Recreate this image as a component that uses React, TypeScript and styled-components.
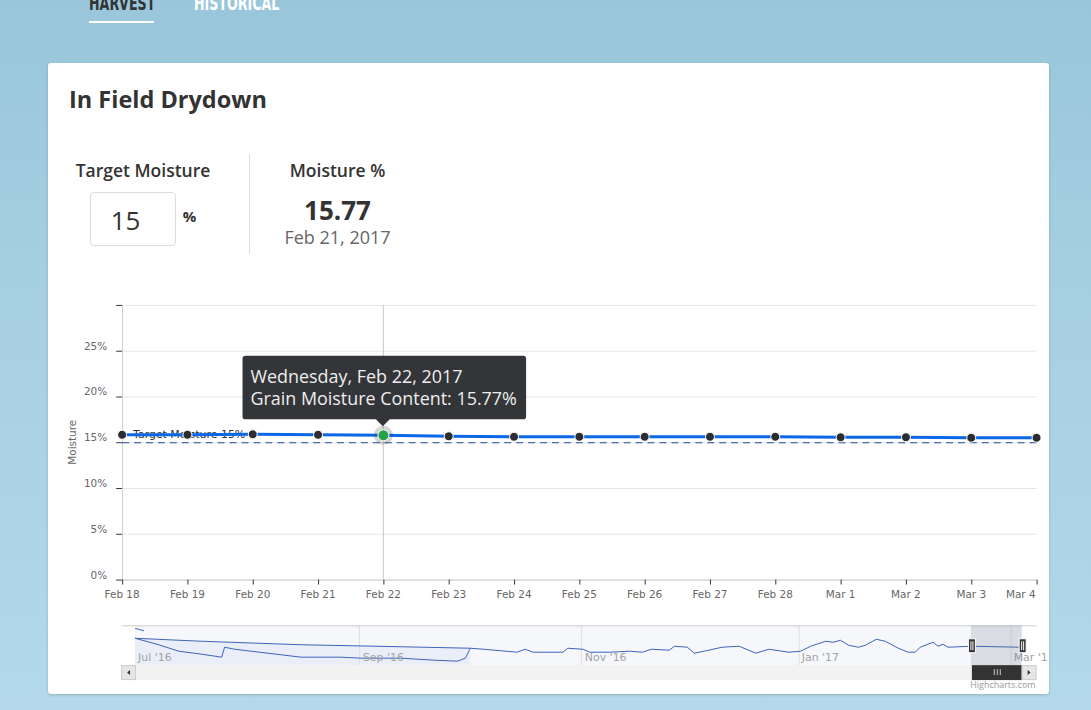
import React from "react";
import styled, { createGlobalStyle } from "styled-components";

const Global = createGlobalStyle`
  html, body { margin: 0; padding: 0; }
  body {
    min-height: 710px;
    overflow: hidden;
    background: linear-gradient(180deg, #99c6da 0%, #a6cfe1 40%, #b3d9ea 100%);
    font-family: "Open Sans", "Noto Sans", sans-serif;
    color: #333;
  }
`;

const Page = styled.div`
  display: flex;
  flex-direction: column;
`;

const TabBar = styled.nav`
  display: flex;
  gap: 40px;
  padding-left: 89px;
  margin-top: -8px;
`;

const Tab = styled.div<{ $active?: boolean; $w: number }>`
  width: ${(p) => p.$w}px;
  font-family: "Liberation Sans Narrow", "DejaVu Sans Condensed", "Roboto", sans-serif;
  font-weight: 700;
  font-size: 19px;
  line-height: 22px;
  text-transform: uppercase;
  color: ${(p) => (p.$active ? "#333" : "#fff")};
  padding-bottom: 7px;
  border-bottom: 2px solid ${(p) => (p.$active ? "#fff" : "transparent")};
  white-space: nowrap;
`;

const TabText = styled.span`
  display: inline-block;
  transform: scaleX(0.74);
  transform-origin: left center;
`;

const Card = styled.section`
  margin: 40px 0 0 48px;
  width: 1001px;
  height: 631px;
  background: #fff;
  border-radius: 3px;
  box-shadow: 0 1px 3px rgba(0, 0, 0, 0.18);
  overflow: hidden;
  display: flex;
  flex-direction: column;
`;

const Title = styled.h1`
  margin: 0;
  padding: 21px 21px 0;
  font-size: 23.5px;
  line-height: 30px;
  font-weight: 700;
  color: #333;
`;

const StatsRow = styled.div`
  display: flex;
  margin: 40px 0 0 26px;
`;

const StatCol = styled.div<{ $divider?: boolean; $width: number; $pr?: number }>`
  width: ${(p) => p.$width}px;
  padding: 4px ${(p) => p.$pr ?? 0}px 6px 0;
  display: flex;
  flex-direction: column;
  align-items: center;
  border-right: ${(p) => (p.$divider ? "1px solid #ddd" : "none")};
`;

const Label = styled.div`
  font-size: 17.5px;
  line-height: 24px;
  font-weight: 600;
  color: #333;
  white-space: nowrap;
`;

const InputRow = styled.div`
  display: flex;
  align-items: flex-start;
  gap: 7px;
  margin-top: 10px;
`;

const NumInput = styled.div`
  width: 64px;
  height: 52px;
  border: 1px solid #dcdcdc;
  border-radius: 4px;
  padding-left: 20px;
  font-size: 26px;
  line-height: 54px;
  color: #333;
  font-weight: 400;
`;

const Unit = styled.span`
  font-size: 15px;
  font-weight: 700;
  line-height: 20px;
  margin-top: 14px;
`;

const BigValue = styled.div`
  font-size: 26px;
  line-height: 30px;
  font-weight: 700;
  color: #333;
  margin-top: 13px;
`;

const SubValue = styled.div`
  font-size: 18px;
  line-height: 22px;
  color: #666;
  margin-top: 1px;
`;

const ChartSvg = styled.svg`
  display: block;
  margin-top: 38px;
  font-family: "DejaVu Sans", "Liberation Sans", sans-serif;
`;

const days = [
  "Feb 18", "Feb 19", "Feb 20", "Feb 21", "Feb 22", "Feb 23", "Feb 24", "Feb 25",
  "Feb 26", "Feb 27", "Feb 28", "Mar 1", "Mar 2", "Mar 3", "Mar 4",
];
const ys = [433.5, 433.5, 433, 433.5, 434, 435, 435.5, 435.5, 435.5, 435.5, 435.5, 436, 436, 436.5, 436.5];
const xAt = (i: number) => 120 + (i * (1039 - 120)) / 14;

const grids = [303, 349, 395, 441, 487, 533, 579];
const yLabels: [string, number][] = [
  ["25%", 349], ["20%", 395], ["15%", 441], ["10%", 487], ["5%", 533], ["0%", 579],
];

const lowerNav =
  "133,638 155,644 177,651 200,654 220,657 223,647 233,649 300,657 340,657 360,658 400,658 433,660 457,661 465,658 470,648 483,649 517,652 525,649 533,652 563,652 568,648 583,649 590,652 610,652 630,651 643,652 652,649 670,650 675,646 688,647 695,653 705,651 723,647 740,646 757,653 770,649 790,652 802,651 812,646 827,641 835,642 842,640 850,645 860,647 867,645 878,639 887,641 900,648 910,652 917,652 922,647 935,642 940,646 945,644 950,647 973,646 1024,647";
const upperNav = "133,638 200,641 300,644.5 400,646.5 470,648";

function Chart() {
  const pts = ys.map((y, i) => `${xAt(i)},${y}`).join(" ");
  return (
    <ChartSvg width={1001} height={404} viewBox="48 290 1001 404">
      {grids.map((g) => (
        <line key={g} x1={120} x2={1039} y1={g + 0.5} y2={g + 0.5} stroke="#e6e6e6" />
      ))}
      {grids.map((g) => (
        <line key={"t" + g} x1={114} x2={120} y1={g + 0.5} y2={g + 0.5} stroke="#333" />
      ))}
      <line x1={120.5} x2={120.5} y1={303} y2={579} stroke="#ccc" />
      <line x1={120} x2={1039} y1={579.5} y2={579.5} stroke="#ccc" />
      {yLabels.map(([t, g]) => (
        <text key={t} x={105} y={g - 1} textAnchor="end" fontSize={10.5} fill="#666">
          {t}
        </text>
      ))}
      <text
        x={74}
        y={441}
        transform="rotate(-90 74 441)"
        textAnchor="middle"
        fontSize={10.5}
        fill="#666"
      >
        Moisture
      </text>
      {days.map((d, i) => (
        <g key={d}>
          <line x1={xAt(i) + 0.5} x2={xAt(i) + 0.5} y1={579} y2={584} stroke="#333" />
          <text
            x={i === 14 ? 1038 : xAt(i)}
            y={598}
            textAnchor={i === 14 ? "end" : "middle"}
            fontSize={10.5}
            fill="#666"
          >
            {d}
          </text>
        </g>
      ))}
      <line x1={382.5} x2={382.5} y1={303} y2={579} stroke="#c8c8c8" />
      <line x1={120} x2={1039} y1={441.5} y2={441.5} stroke="#1d4a9a" strokeWidth={1} strokeDasharray="7 5" />
      <text x={131} y={437} fontSize={11} fill="#333">
        Target Moisture 15%
      </text>
      <polyline points={pts} fill="none" stroke="#0a68e6" strokeWidth={3} strokeLinejoin="round" />
      {ys.map((y, i) =>
        i === 4 ? null : (
          <circle key={i} cx={xAt(i)} cy={y} r={4.5} fill="#2b2d31" stroke="#fff" strokeWidth={1} />
        )
      )}
      <circle cx={xAt(4)} cy={ys[4]} r={9.5} fill="#2b2d31" opacity={0.2} />
      <circle cx={xAt(4)} cy={ys[4]} r={5.5} fill="#27a149" stroke="#fff" strokeWidth={1} />
      <path
        d="M244,354 H523 Q526,354 526,357 V415 Q526,418 523,418 H389 L382,425 L375,418 H244 Q241,418 241,415 V357 Q241,354 244,354 Z"
        fill="#2c2e33"
        opacity={0.97}
      />
      <text x={249} y={381} fontSize={18} fill="#eee" fontFamily="'Open Sans', sans-serif">
        Wednesday, Feb 22, 2017
      </text>
      <text x={249} y={404} fontSize={18} fill="#eee" fontFamily="'Open Sans', sans-serif">
        Grain Moisture Content: 15.77%
      </text>

      <rect x={133} y={625} width={891} height={40} fill="#f5f7fb" />
      <polygon points={`${upperNav} 470,665 133,665`} fill="#eaeef8" />
      {[358, 581, 800, 1013].map((x) => (
        <line key={x} x1={x + 0.5} x2={x + 0.5} y1={625} y2={665} stroke="#e0e0e0" />
      ))}
      <line x1={120} x2={1039} y1={625.5} y2={625.5} stroke="#ccc" />
      <polyline points={upperNav} fill="none" stroke="#3b63b8" strokeWidth={1} />
      <polyline points={lowerNav} fill="none" stroke="#3b63b8" strokeWidth={1} />
      <polyline points="133,628 142,630.5" fill="none" stroke="#3b63b8" strokeWidth={1} />
      {[["Jul '16", 136], ["Sep '16", 362], ["Nov '16", 585], ["Jan '17", 803], ["Mar '1", 1016]].map(
        ([t, x]) => (
          <text key={t as string} x={x as number} y={661} fontSize={11} fill="#a3a3a3">
            {t}
          </text>
        )
      )}
      <rect x={973} y={625} width={51} height={40} fill="#6b7280" opacity={0.2} />
      {[970, 1021].map((x) => (
        <g key={x}>
          <rect x={x + 0.5} y={638.5} width={7} height={14} fill="#333" stroke="#fff" />
          <line x1={x + 3} x2={x + 3} y1={641} y2={650} stroke="#fff" />
          <line x1={x + 5} x2={x + 5} y1={641} y2={650} stroke="#fff" />
        </g>
      ))}
      <rect x={119} y={665} width={920} height={15} fill="#f2f2f2" />
      <rect x={119.5} y={665.5} width={14} height={14} fill="#e6e6e6" stroke="#ccc" />
      <path d="M125,672.5 L128,670 L128,675 Z" fill="#333" />
      <rect x={974} y={665} width={50} height={15} fill="#333" />
      {[996, 999, 1002].map((x) => (
        <line key={x} x1={x + 0.5} x2={x + 0.5} y1={669} y2={675} stroke="#ccc" />
      ))}
      <rect x={1024.5} y={665.5} width={14} height={14} fill="#e6e6e6" stroke="#ccc" />
      <path d="M1033,672.5 L1030,670 L1030,675 Z" fill="#333" />
      <text x={1038} y={688} textAnchor="end" fontSize={9} fill="#999" fontFamily="'Open Sans', sans-serif">
        Highcharts.com
      </text>
    </ChartSvg>
  );
}

export default function App() {
  return (
    <Page>
      <Global />
      <TabBar>
        <Tab $active $w={65}>
          <TabText>Harvest</TabText>
        </Tab>
        <Tab $w={83}>
          <TabText>Historical</TabText>
        </Tab>
      </TabBar>
      <Card>
        <Title>In Field Drydown</Title>
        <StatsRow>
          <StatCol $divider $width={138} $pr={37}>
            <Label>Target Moisture</Label>
            <InputRow>
              <NumInput>15</NumInput>
              <Unit>%</Unit>
            </InputRow>
          </StatCol>
          <StatCol $width={175}>
            <Label>Moisture %</Label>
            <BigValue>15.77</BigValue>
            <SubValue>Feb 21, 2017</SubValue>
          </StatCol>
        </StatsRow>
        <Chart />
      </Card>
    </Page>
  );
}
